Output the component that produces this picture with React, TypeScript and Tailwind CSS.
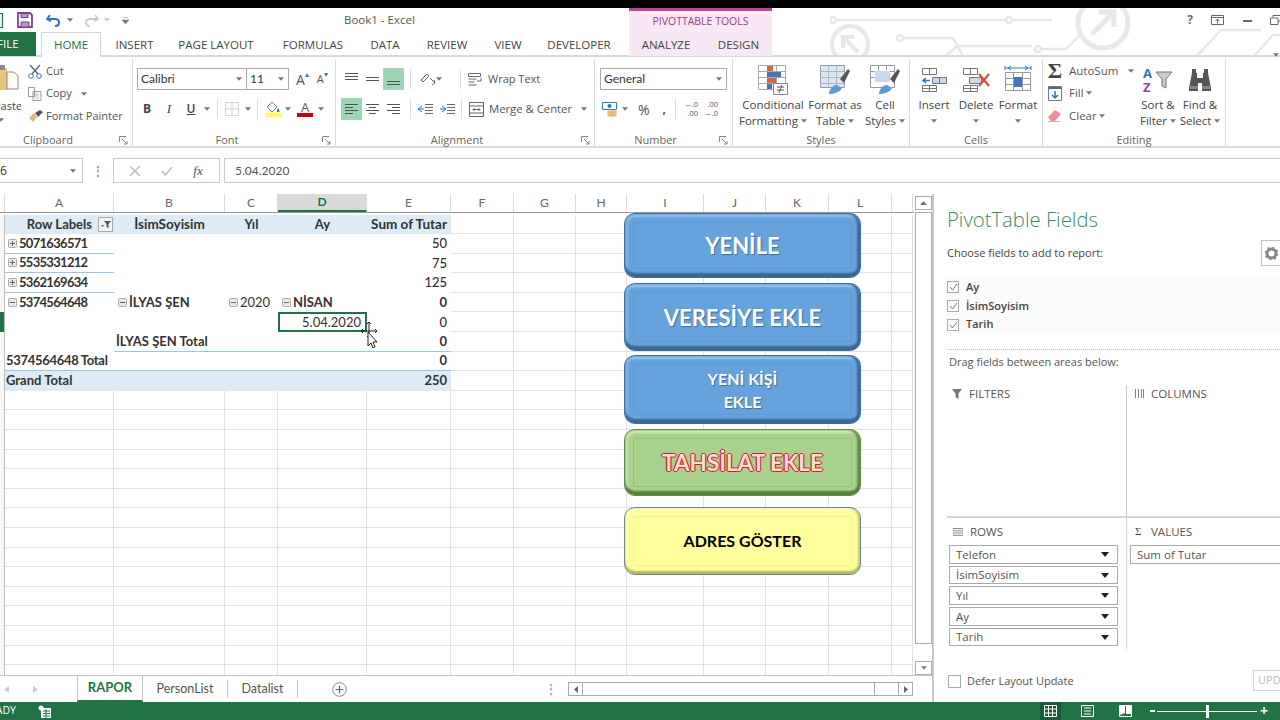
import type { ReactNode } from 'react';

const Caret = ({ className = '' }: { className?: string }) => (
  <svg width="6" height="4" viewBox="0 0 7 4" className={`inline-block shrink-0 ${className}`}>
    <path d="M0 0h7L3.500 4z" fill="#777" />
  </svg>
);

const Launcher = () => (
  <svg width="9" height="9" viewBox="0 0 9 9" className="absolute right-[4px] top-[2px]">
    <path d="M.5 6V.5H7M3 3l5 5M8 5v3H5" fill="none" stroke="#888" />
  </svg>
);

const Group = ({ width, label, labelClass = '', launcher, children }: { width: string; label: string; labelClass?: string; launcher?: boolean; children: ReactNode }) => (
  <div className={`${width} shrink-0 h-[87px] border-r border-[#dcdcdc] flex flex-col`}>
    <div className="h-[75px] flex">{children}</div>
    <div className={`relative h-[12px] text-center text-[11px] leading-[12px] text-[#666] ${labelClass}`}>
      {label}
      {launcher && <Launcher />}
    </div>
  </div>
);

const Big = ({ width, icon, lines }: { width: string; icon: ReactNode; lines: ReactNode[] }) => (
  <div className={`${width} shrink-0 flex flex-col items-center text-[11.500px] leading-[16px] text-[#444] whitespace-nowrap pt-[4px]`}>
    <div className="h-[34px] shrink-0 flex items-center justify-center">{icon}</div>
    <div className="text-center">{lines[0]}</div>
    <div className="text-center flex items-center gap-[3px] h-[16px]">{lines[1]}</div>
  </div>
);

const Tab = ({ children, className = '' }: { children: ReactNode; className?: string }) => (
  <div className={`h-[25px] flex items-center justify-center text-[11.500px] text-[#444] shrink-0 ${className}`}>{children}</div>
);

const AlignLines = ({ rows, active = false }: { rows: number[][]; active?: boolean }) => (
  <div className={`w-[21px] h-[22px] flex items-center justify-center shrink-0 ${active ? 'bg-[#9fd5b7]' : ''}`}>
    <svg width="15" height="14" viewBox="0 0 15 14">
      {rows.map(([x1, x2, y], i) => (
        <path key={i} d={`M${x1} ${y}.5H${x2}`} stroke="#555" />
      ))}
    </svg>
  </div>
);

const widths = [5, 109, 111, 53, 89, 84, 63, 62, 51, 77, 62, 63, 63, 21];
const letters = ['', 'A', 'B', 'C', 'D', 'E', 'F', 'G', 'H', 'I', 'J', 'K', 'L', ''];

type Cell = { t?: string; b?: boolean; right?: boolean; center?: boolean; exp?: '+' | '-'; bg?: boolean; line?: boolean; sel?: boolean; medium?: boolean; pad?: string; lg?: boolean; track?: string };

const Exp = ({ kind }: { kind: '+' | '-' }) => (
  <svg width="9" height="9" viewBox="0 0 9 9" className="shrink-0 mr-[2px]">
    <rect x=".5" y=".5" width="8" height="8" rx="1" fill="#e8e8e8" stroke="#aaa" />
    <path d={kind === '+' ? 'M2 4.500h5M4.500 2v5' : 'M2 4.500h5'} stroke="#666" />
  </svg>
);

const digits = 'tracking-[-0.7px]';

const pivotRows: Cell[][] = [
  [{ t: 'Row Labels', b: true, bg: true, pad: 'justify-end pr-[1px]' }, { t: 'İsimSoyisim', b: true, bg: true, center: true, lg: true }, { t: 'Yıl', b: true, bg: true, center: true }, { t: 'Ay', b: true, bg: true, center: true }, { t: 'Sum of Tutar', b: true, bg: true, right: true, lg: true }],
  [{ t: '5071636571', b: true, exp: '+', line: true, pad: 'pl-[3px]', track: digits }, {}, {}, {}, { t: '50', right: true, medium: true }],
  [{ t: '5535331212', b: true, exp: '+', line: true, pad: 'pl-[3px]', track: digits }, {}, {}, {}, { t: '75', right: true, medium: true }],
  [{ t: '5362169634', b: true, exp: '+', line: true, pad: 'pl-[3px]', track: digits }, {}, {}, {}, { t: '125', right: true, medium: true }],
  [{ t: '5374564648', b: true, exp: '-', pad: 'pl-[3px]', track: digits }, { t: 'İLYAS ŞEN', b: true, exp: '-' }, { t: '2020', exp: '-' }, { t: 'NİSAN', b: true, exp: '-' }, { t: '0', b: true, right: true }],
  [{}, {}, {}, { t: '5.04.2020', right: true, sel: true }, { t: '0', right: true, medium: true }],
  [{}, { t: 'İLYAS ŞEN Total', b: true, line: true }, { line: true }, { line: true }, { t: '0', b: true, right: true, line: true }],
  [{ t: '5374564648 Total', b: true, line: true, pad: 'pl-[1px]', track: 'tracking-[-0.3px]' }, { line: true }, { line: true }, { line: true }, { t: '0', b: true, right: true, line: true }],
  [{ t: 'Grand Total', b: true, bg: true, pad: 'pl-[1px]' }, { bg: true }, { bg: true }, { bg: true }, { t: '250', b: true, bg: true, right: true }],
];

const PivotCell = ({ cell, filter }: { cell: Cell; filter?: boolean }) => {
  const cls = [
    'h-[19.6px] flex items-center whitespace-nowrap text-[#333]',
    cell.lg ? 'text-[13.5px]' : 'text-[13px]',
    cell.track ?? '',
    cell.bg ? 'bg-[#ddebf7]' : 'bg-white',
    cell.line ? 'border-b border-[#9dc3e6]' : '',
    cell.b ? 'font-bold' : cell.medium ? 'font-medium' : '',
    cell.sel ? 'justify-end pr-[4px] border-2 border-[#217346]' : cell.right ? 'justify-end pr-[4px]' : cell.center ? 'justify-center' : cell.pad ?? (cell.exp ? 'pl-[4px]' : 'pl-[2px]'),
  ].join(' ');
  return (
    <div className={cls}>
      {cell.exp && <Exp kind={cell.exp} />}
      {cell.t}
      {filter && (
        <span className="ml-[6px] w-[15px] h-[15px] bg-[#f2f2f2] border border-[#aaa] flex items-center justify-center">
          <svg width="10" height="9" viewBox="0 0 10 9"><path d="M3 1h7L7.500 4v4L5.500 7V4zM0 5h3L1.500 7z" fill="#555" /></svg>
        </span>
      )}
    </div>
  );
};

const SheetGrid = () => {
  const rows = Array.from({ length: 24 });
  return (
    <div className="mt-[1.5px] grid grid-cols-[5px_109px_111px_53px_89px_84px_63px_62px_51px_77px_62px_63px_63px_21px] font-['Lato',sans-serif]">
      {rows.map((_, r) =>
        widths.map((__, c) => {
          if (c === 0) return <div key={`${r}-0`} className={`h-[19.6px] border-r border-[#bdbdbd] ${r === 5 ? 'bg-[#217346]' : 'bg-[#f8f8f8]'}`} />;
          const pivot = pivotRows[r];
          if (pivot && c <= 5) return <PivotCell key={`${r}-${c}`} cell={pivot[c - 1]} filter={r === 0 && c === 1} />;
          return <div key={`${r}-${c}`} className="h-[19.6px] border-r border-b border-[#e2e2e2]" />;
        }),
      )}
    </div>
  );
};

const blueBevel = "bg-[#66a3dc] border border-[#3f6f9f] text-white [text-shadow:1px_1px_1px_#3d6b99] shadow-[inset_0_-4px_2px_#3a6690,inset_-3px_0_2px_#3f6e9c,inset_3px_0_2px_#7db4e6,inset_0_3px_2px_#93c8f0]";

const Shape = ({ className, inner, children }: { className: string; inner: string; children: ReactNode }) => (
  <div className={`relative w-[237px] rounded-[11px] flex flex-col items-center justify-center font-bold text-center ${className}`}>
    <div className={`absolute inset-x-[8px] inset-y-[8px] border rounded-[2px] ${inner}`} />
    {children}
  </div>
);

const FieldCheck = ({ label }: { label: string }) => (
  <div className="h-[19px] flex items-center gap-[7px] ml-[1px]">
    <span className="w-[12px] h-[12px] border border-[#aaa] bg-white flex items-center justify-center">
      <svg width="9" height="8" viewBox="0 0 9 8"><path d="M1 4l2.500 3L8 1" fill="none" stroke="#777" /></svg>
    </span>
    <span className="font-semibold text-[11px] text-[#444]">{label}</span>
  </div>
);

const AreaField = ({ label, w = 'w-[169px]', arrow = true }: { label: string; w?: string; arrow?: boolean }) => (
  <div className={`${w} h-[18.700px] shrink-0 border border-[#aaa] bg-white flex items-center justify-between pl-[6px] pr-[8px] text-[11.500px] text-[#555]`}>
    {label}
    {arrow && <svg width="8" height="5" viewBox="0 0 8 5"><path d="M0 0h8L4 5z" fill="#222" /></svg>}
  </div>
);

const Sep = ({ className }: { className: string }) => <div className={`w-px h-[20px] bg-[#dcdcdc] shrink-0 ${className}`} />;

const App = () => {
  return (
    <div className="relative w-[1280px] h-[720px] overflow-hidden bg-white flex flex-col font-['Open_Sans',sans-serif]">
      <div className="h-[8px] bg-black shrink-0" />

      {/* title bar + tabs, circuit art sits behind */}
      <div className="relative h-[49px] shrink-0">
        <svg width="450" height="49" viewBox="830 8 450 49" className="absolute right-0 top-0" fill="none" stroke="#e8e8e8" strokeWidth="2.500">
          <circle cx="833" cy="20" r="3" />
          <path d="M836 20H1006" />
          <circle cx="1009" cy="20" r="3" />
          <path d="M1012 20h40" />
          <circle cx="850" cy="44" r="18" strokeWidth="4" />
          <path d="M858 52l-14-14M843 48V37h11" strokeWidth="4" />
          <circle cx="900" cy="38" r="3" />
          <path d="M903 38h50l10 18" />
          <path d="M945 57l12-11h75" />
          <circle cx="1038" cy="49" r="3" />
          <path d="M1041 49h25l14-14" />
          <circle cx="1103" cy="23" r="25" strokeWidth="5" />
          <path d="M1092 34l21-21M1099 12h15v15" strokeWidth="5" />
          <path d="M1196 57l25-27h40" />
          <path d="M1253 57l20-22h7" />
        </svg>

        <div className="relative h-[24px] flex items-center">
          <div className="w-[3px] h-[15px] border-y border-r border-[#217346] bg-[#e6f2ea]" />
          <svg width="16" height="16" viewBox="0 0 16 16" className="ml-[14px]">
            <path d="M1 1h12l2 2v12H1z" fill="none" stroke="#7b3f98" strokeWidth="1.800" />
            <path d="M4 1.500h7v4H4zM4 10h8v5H4z" fill="#b695cc" stroke="#7b3f98" />
          </svg>
          <svg width="15" height="13" viewBox="0 0 15 13" className="ml-[13px]">
            <path d="M4 1L1 5l4 2M1.500 5H9c3 0 4 2 4 3.500S12 12 9 12" fill="none" stroke="#2e75b5" strokeWidth="2" />
          </svg>
          <Caret className="ml-[6px]" />
          <svg width="15" height="13" viewBox="0 0 15 13" className="ml-[11px]">
            <path d="M11 1l3 4-4 2M13.500 5H6C3 5 2 7 2 8.500S3 12 6 12" fill="none" stroke="#ccc" strokeWidth="2" />
          </svg>
          <Caret className="ml-[5px] opacity-40" />
          <svg width="7" height="7" viewBox="0 0 7 7" className="ml-[12px]"><path d="M1 .5h5M0 3h7L3.500 7z" fill="#777" stroke="#777" strokeWidth=".5" /></svg>
          <div className="absolute left-[344px] text-[11.500px] text-[#555]">Book1 - Excel</div>
          <div className="absolute right-0 top-0 h-[24px] flex items-center text-[#666]">
            <span className="font-bold text-[12px] mr-[18px]">?</span>
            <svg width="13" height="10" viewBox="0 0 13 10" className="mr-[19px]"><path d="M.5.500h12v9H.5zM.5 2.500h12M6.500 8V4M4.500 6l2-2 2 2" fill="none" stroke="#666" /></svg>
            <div className="w-[9px] h-[2px] bg-[#666] mr-[18px] mt-[1px]" />
            <svg width="11" height="10" viewBox="0 0 11 10" className="mr-[-1px]"><path d="M3 2.500V.5h7.500V6H8M.5 3h7.500v6.500H.5z" fill="none" stroke="#666" /></svg>
          </div>
        </div>

        <div className="relative h-[25px] flex border-b-2 border-[#dadada]">
          <div className="w-[36px] h-[24px] bg-[#217346] text-white text-[11.500px] flex items-center overflow-hidden shrink-0"><span className="-ml-[3px]">FILE</span></div>
          <div className="ml-[5px] w-[60px] h-[25px] bg-white border-x border-t border-[#d4d4d4] text-[#217346] text-[11.500px] flex items-center justify-center shrink-0 z-10">HOME</div>
          <Tab className="w-[67px]">INSERT</Tab>
          <Tab className="w-[98px] ml-[-1px]">PAGE LAYOUT</Tab>
          <Tab className="w-[92px] ml-[2px]">FORMULAS</Tab>
          <Tab className="w-[48px] ml-[2px]">DATA</Tab>
          <Tab className="w-[70px] ml-[3px]">REVIEW</Tab>
          <Tab className="w-[52px]">VIEW</Tab>
          <Tab className="w-[84px] ml-[3px]">DEVELOPER</Tab>
          <div className="absolute left-[629px] top-[-24px] w-[143px] h-[48px] bg-[#f8e8f5] border-t-[3px] border-[#b5479a]">
            <div className="h-[21px] flex items-center justify-center text-[10.500px] text-[#a0398a]">PIVOTTABLE TOOLS</div>
            <div className="flex text-[11.500px] text-[#444]">
              <Tab className="w-[74px]">ANALYZE</Tab>
              <Tab className="w-[71px]">DESIGN</Tab>
            </div>
          </div>
          <div className="absolute right-[1px] top-[9px]"><Caret /></div>
        </div>
      </div>

      {/* ribbon */}
      <div className="h-[91px] shrink-0 flex pt-[2px] border-b-2 border-[#dadada] bg-white">
        <Group width="w-[133px]" label="Clipboard" labelClass="pr-[36px]" launcher>
          <div className="w-[21px] shrink-0 overflow-hidden flex flex-col pt-[4px] text-[11px] text-[#444]">
            <svg width="19" height="30" viewBox="0 0 19 30" className="shrink-0">
              <path d="M-5 5h12v22H-5z" fill="#e9c47c" />
              <path d="M-2 2h7v5h-7z" fill="#8a8a8a" />
              <path d="M7 9h7l4 4v13H7z" fill="#fff" stroke="#888" />
            </svg>
            <div className="-ml-[6px] leading-[14px] mt-[6px]">Paste</div>
            <Caret className="ml-[-2px] mt-[5px]" />
          </div>
          <div className="ml-[7px] pt-[1px] text-[11px] text-[#555] whitespace-nowrap">
            <div className="h-[22px] flex items-center">
              <svg width="14" height="15" viewBox="0 0 14 15"><path d="M2 1l8 9M12 1L4 10" stroke="#666" strokeWidth="1.300" /><circle cx="3" cy="12" r="2.300" fill="none" stroke="#2e75b5" /><circle cx="11" cy="12" r="2.300" fill="none" stroke="#2e75b5" /></svg>
              <span className="ml-[4px]">Cut</span>
            </div>
            <div className="h-[23px] flex items-center">
              <svg width="14" height="14" viewBox="0 0 14 14"><path d="M.5.500h6v9h-6zM5 4.500h8v9H5z" fill="#fff" stroke="#999" /><path d="M7 7h4M7 9h4M7 11h4" stroke="#bbb" /></svg>
              <span className="ml-[4px]">Copy</span>
              <Caret className="ml-[9px]" />
            </div>
            <div className="h-[22px] flex items-center">
              <svg width="16" height="14" viewBox="0 0 16 14"><path d="M1 9l5-5 3 4-4 5z" fill="#e2b878" /><path d="M7 4l5-3 3 2-5 5z" fill="#555" /></svg>
              <span className="ml-[2px]">Format Painter</span>
            </div>
          </div>
        </Group>

        <Group width="w-[203px]" label="Font" labelClass="pr-[14px]" launcher>
          <div className="pl-[4px] pt-[9px] w-full">
            <div className="flex items-center h-[22px]">
              <div className="w-[110px] h-[22px] border border-[#aaa] flex items-center justify-between pl-[3px] pr-[4px] text-[12px] text-[#333] font-['Lato',sans-serif]">Calibri<Caret /></div>
              <div className="w-[42px] h-[22px] border border-l-0 border-[#aaa] flex items-center justify-between pl-[3px] pr-[4px] text-[12px] text-[#333] font-['Lato',sans-serif]">11<Caret /></div>
              <span className="ml-[7px] text-[14px] text-[#555]">A</span><span className="text-[8px] text-[#2e75b5] -mt-[10px]">▴</span>
              <span className="ml-[8px] text-[11px] text-[#555]">A</span><span className="text-[8px] text-[#2e75b5] -mt-[10px]">▾</span>
            </div>
            <div className="flex items-center h-[22px] mt-[8px] text-[#444] text-[12px]">
              <span className="w-[20px] text-center font-bold">B</span>
              <span className="w-[24px] text-center italic font-['Liberation_Serif',serif] text-[13px]">I</span>
              <span className="w-[20px] text-center font-semibold underline">U</span>
              <Caret className="ml-[3px]" />
              <Sep className="ml-[7px]" />
              <svg width="14" height="14" viewBox="0 0 14 14" className="ml-[7px]"><path d="M.5.500h13v13H.5zM7 .5v13M.5 7h13" fill="none" stroke="#aaa" strokeDasharray="1 1" /></svg>
              <Caret className="ml-[6px]" />
              <Sep className="ml-[6px]" />
              <div className="ml-[7px] w-[16px] flex flex-col items-center">
                <svg width="16" height="12" viewBox="0 0 16 12"><path d="M2 6l5-5 5 5-5 5z" fill="#fff" stroke="#777" /><path d="M13 7c2 2 2 4 0 4s-1-2 0-4z" fill="#2e75b5" /></svg>
                <div className="w-[16px] h-[4px] bg-[#ffff4d]" />
              </div>
              <Caret className="ml-[4px]" />
              <div className="ml-[6px] w-[16px] flex flex-col items-center leading-[12px]">
                <span className="text-[13px] leading-[12px] text-[#555]">A</span>
                <div className="w-[16px] h-[4px] bg-[#d40000]" />
              </div>
              <Caret className="ml-[5px]" />
            </div>
          </div>
        </Group>

        <Group width="w-[259px]" label="Alignment" labelClass="pr-[16px]" launcher>
          <div className="pl-[5px] pt-[9px]">
            <div className="flex items-center h-[22px]">
              <AlignLines rows={[[1, 14, 1], [1, 14, 4], [1, 14, 7]]} />
              <AlignLines rows={[[1, 14, 5], [1, 14, 8]]} />
              <AlignLines active rows={[[1, 14, 9], [1, 14, 12]]} />
              <Sep className="ml-[6px]" />
              <svg width="16" height="14" viewBox="0 0 16 14" className="ml-[9px]"><path d="M1 8l6-6 2 2-6 6zM10 6l5 5M12 13l3-2-1-3" fill="none" stroke="#666" /></svg>
              <Caret />
              <Sep className="ml-[18px]" />
              <svg width="15" height="15" viewBox="0 0 15 15" className="ml-[7px]"><path d="M.5 1.500h12v3H.5zM.5 7h8M.5 10h6M.5 13h8M13 6v3H9" fill="none" stroke="#666" /></svg>
              <span className="ml-[5px] text-[11px] text-[#555]">Wrap Text</span>
            </div>
            <div className="flex items-center h-[22px] mt-[8px]">
              <AlignLines active rows={[[1, 14, 2], [1, 9, 5], [1, 14, 8], [1, 9, 11]]} />
              <AlignLines rows={[[1, 14, 2], [4, 11, 5], [1, 14, 8], [4, 11, 11]]} />
              <AlignLines rows={[[1, 14, 2], [6, 14, 5], [1, 14, 8], [6, 14, 11]]} />
              <Sep className="ml-[6px]" />
              <svg width="16" height="12" viewBox="0 0 16 12" className="ml-[6px]"><path d="M5 3l-4 3 4 3M1 6h6" fill="none" stroke="#2e75b5" /><path d="M8 1.500h8M8 4.500h8M8 7.500h8M8 10.500h8" stroke="#666" /></svg>
              <svg width="16" height="12" viewBox="0 0 16 12" className="ml-[6px]"><path d="M3 3l4 3-4 3M7 6H1" fill="none" stroke="#2e75b5" /><path d="M8 1.500h8M8 4.500h8M8 7.500h8M8 10.500h8" stroke="#666" /></svg>
              <Sep className="ml-[6px]" />
              <svg width="15" height="15" viewBox="0 0 15 15" className="ml-[7px]"><path d="M.5.500h14v14H.5zM.5 4h14M.5 11h14M4 7.500h7M5.500 6L4 7.500 5.500 9M9.500 6L11 7.500 9.500 9" fill="none" stroke="#666" /></svg>
              <span className="ml-[5px] text-[11.300px] text-[#555] whitespace-nowrap">Merge &amp; Center</span>
              <Caret className="ml-[9px]" />
            </div>
          </div>
        </Group>

        <Group width="w-[138px]" label="Number" labelClass="pr-[16px]" launcher>
          <div className="pl-[5px] pt-[9px]">
            <div className="w-[127px] h-[22px] border border-[#aaa] flex items-center justify-between pl-[3px] pr-[4px] text-[12px] text-[#333] font-['Lato',sans-serif]">General<Caret /></div>
            <div className="flex items-center h-[22px] mt-[8px] text-[#555]">
              <svg width="16" height="16" viewBox="0 0 16 16" className="ml-[2px]"><path d="M.5 1.500h14v7H.5z" fill="#fff" stroke="#2e75b5" /><circle cx="7.500" cy="5" r="2" fill="#2e75b5" /><ellipse cx="10" cy="11" rx="5" ry="1.800" fill="#e4bb6f" /><ellipse cx="10" cy="14" rx="5" ry="1.800" fill="#e4bb6f" /></svg>
              <Caret className="ml-[4px]" />
              <span className="ml-[10px] text-[14px]">%</span>
              <span className="ml-[13px] font-bold text-[12px] leading-[12px]">,</span>
              <Sep className="ml-[9px]" />
              <div className="ml-[7px] w-[15px] text-[7.500px] leading-[9px] text-right whitespace-nowrap"><span className="text-[#2e75b5]">←</span>.0<br />.00</div>
              <div className="ml-[5px] w-[15px] text-[7.500px] leading-[9px] text-right whitespace-nowrap">.00<br /><span className="text-[#2e75b5]">→</span>.0</div>
            </div>
          </div>
        </Group>

        <Group width="w-[177px]" label="Styles">
          <div className="flex ml-[5px]">
            <Big
              width="w-[70px]"
              icon={
                <svg width="30" height="30" viewBox="0 0 30 30">
                  <path d="M.5.500h27v24H.5zM.5 6.500h27M.5 12.500h27M.5 18.500h27M9.500.5v24M18.500.5v24" fill="#fff" stroke="#aaa" />
                  <path d="M9 1h6v5H9z" fill="#d8654a" /><path d="M9 7h14v5H9z" fill="#3e78b8" /><path d="M9 13h9v5H9z" fill="#d8654a" /><path d="M9 19h5v5H9z" fill="#3e78b8" />
                  <path d="M15.500 18.500h14v11h-14z" fill="#fff" stroke="#888" /><path d="M19 22h7M19 25h7M24 20l-3 8" stroke="#555" />
                </svg>
              }
              lines={['Conditional', <>Formatting <Caret /></>]}
            />
            <Big
              width="w-[54px]"
              icon={
                <svg width="30" height="30" viewBox="0 0 30 30">
                  <path d="M.5.500h24v22H.5z" fill="#dce6f1" stroke="#999" /><path d="M.5 6.500h24M.5 12.500h24M.5 18.500h24M8.500.5v22M16.500.5v22" stroke="#aab8c9" />
                  <path d="M20 14l8-10 2 2-6 12z" fill="#555" /><path d="M9 29c0-5 4-9 8-9l5 3c-2 4-8 6-13 6z" fill="#5b9bd5" />
                </svg>
              }
              lines={['Format as', <>Table <Caret /></>]}
            />
            <Big
              width="w-[46px]"
              icon={
                <svg width="30" height="30" viewBox="0 0 30 30">
                  <path d="M.5.500h24v22H.5zM.5 6.500h4M20 6.500h4M.5 12.500h4M8.500.5v5M16.500.5v5" fill="#fff" stroke="#999" /><path d="M5 6h15v11H5z" fill="#c9d9ee" />
                  <path d="M20 14l8-10 2 2-6 12z" fill="#555" /><path d="M9 29c0-5 4-9 8-9l5 3c-2 4-8 6-13 6z" fill="#5b9bd5" />
                </svg>
              }
              lines={['Cell', <>Styles <Caret /></>]}
            />
          </div>
        </Group>

        <Group width="w-[133px]" label="Cells">
          <div className="flex ml-[3px]">
            <Big
              width="w-[42px]"
              icon={
                <svg width="28" height="28" viewBox="0 0 28 28">
                  <path d="M2.500 2.500h14v6h-14zM2.500 19.500h14v6h-14zM9.500 2.500v6M9.500 19.500v6M2.500 22.500h14" fill="none" stroke="#777" />
                  <path d="M12.500 11.500h14v6h-14zM19.500 11.500v6" fill="#c9d9ee" stroke="#777" />
                  <path d="M10 14.500H3M6 12l-3 2.500L6 17" fill="none" stroke="#2e75b5" strokeWidth="1.500" />
                </svg>
              }
              lines={['Insert', <Caret key="c" />]}
            />
            <Big
              width="w-[42px]"
              icon={
                <svg width="30" height="28" viewBox="0 0 30 28">
                  <path d="M2.500 2.500h14v6h-14zM2.500 19.500h14v6h-14zM9.500 2.500v6M9.500 19.500v6M2.500 22.500h14" fill="none" stroke="#777" />
                  <path d="M8.500 11.500h12v6h-12z" fill="#c9d9ee" stroke="#777" />
                  <path d="M18 8l10 12M28 8L18 20" stroke="#d9482b" strokeWidth="2" />
                </svg>
              }
              lines={['Delete', <Caret key="c" />]}
            />
            <Big
              width="w-[42px]"
              icon={
                <svg width="28" height="30" viewBox="0 0 28 30">
                  <path d="M1 3h26M1 1v4M27 1v4M4 3l3-2M4 3l3 2M24 3l-3-2M24 3l-3 2" fill="none" stroke="#2e75b5" />
                  <path d="M1.500 7.500h25v18h-25zM9.500 7.500v18M18.500 7.500v18M1.500 13.500h25M1.500 19.500h25" fill="#fff" stroke="#999" />
                  <path d="M10 12h8v10h-8z" fill="#3e78b8" />
                </svg>
              }
              lines={['Format', <Caret key="c" />]}
            />
          </div>
        </Group>

        <Group width="w-[183px]" label="Editing">
          <div className="flex ml-[4px]">
            <div className="w-[90px] shrink-0 text-[11.500px] text-[#555] whitespace-nowrap">
              <div className="h-[23px] flex items-center">
                <span className="w-[16px] text-[22px] leading-[20px] font-['Liberation_Serif',serif] text-[#444] font-bold text-center">Σ</span>
                <span className="ml-[6px]">AutoSum</span>
                <Caret className="ml-[10px]" />
              </div>
              <div className="h-[22px] flex items-center">
                <svg width="14" height="15" viewBox="0 0 14 15" className="ml-[1px]"><path d="M.5.500h13v14H.5z" fill="#fff" stroke="#777" /><path d="M.5 1h13v2H.5z" fill="#666" /><path d="M7 5v7M4 9l3 3 3-3" fill="none" stroke="#2e75b5" strokeWidth="1.500" /></svg>
                <span className="ml-[7px]">Fill</span>
                <Caret className="ml-[2px]" />
              </div>
              <div className="h-[23px] flex items-center">
                <svg width="15" height="13" viewBox="0 0 15 13"><path d="M1 8l7-7 6 4-6 7H4z" fill="#ea8f9b" /><path d="M1 12.500h12" stroke="#bbb" /></svg>
                <span className="ml-[7px]">Clear</span>
                <Caret className="ml-[2px]" />
              </div>
            </div>
            <Big
              width="w-[42px]"
              icon={
                <div className="flex items-center w-[30px] h-[28px] font-bold text-[13px] leading-[14px]">
                  <div className="w-[13px]">
                    <div className="text-[#2e75b5]">A</div>
                    <div className="text-[#8e44ad]">Z</div>
                  </div>
                  <svg width="16" height="18" viewBox="0 0 16 18"><path d="M0 1h16l-6 7v9l-4-2V8z" fill="#ccc" stroke="#777" /></svg>
                </div>
              }
              lines={['Sort &', <>Filter <Caret /></>]}
            />
            <Big
              width="w-[42px]"
              icon={
                <svg width="26" height="24" viewBox="0 0 26 24">
                  <path d="M5 1h4v4h1v5h6V5h1V1h4v4l3 15v3H15v-8h-4v8H2v-3L5 5z" fill="#555" />
                  <path d="M3 18h8v3H3zM15 18h8v3h-8z" fill="#888" />
                </svg>
              }
              lines={['Find &', <>Select <Caret /></>]}
            />
          </div>
        </Group>
      </div>

      {/* formula bar */}
      <div className="h-[36px] shrink-0 pt-[10px] flex">
        <div className="w-[83px] h-[25px] border border-l-0 border-[#c8c8c8] flex items-center justify-between pr-[6px] text-[12px] text-[#333]">
          <span>6</span><Caret />
        </div>
        <div className="w-[30px] flex items-center justify-center text-[#999] text-[12px] font-bold">⋮</div>
        <div className="w-[107px] h-[25px] border border-[#c8c8c8] flex items-center justify-around px-[6px] text-[#bbb]">
          <svg width="10" height="10" viewBox="0 0 10 10"><path d="M0 0l10 10M10 0L0 10" stroke="#bbb" strokeWidth="1.400" /></svg>
          <svg width="12" height="10" viewBox="0 0 12 10"><path d="M1 5l3.500 4L11 1" fill="none" stroke="#bbb" strokeWidth="1.400" /></svg>
          <span className="font-['Liberation_Serif',serif] italic text-[13px] text-[#555]">fx</span>
        </div>
        <div className="ml-[4px] flex-1 h-[25px] border-y border-l border-[#c8c8c8] flex items-center pl-[10px] text-[12px] text-[#555] font-['Lato',sans-serif]">5.04.2020</div>
      </div>

      {/* work area */}
      <div className="flex h-[518px] shrink-0">
        <div className="w-[932px] shrink-0 flex flex-col">
          <div className="h-[491px] flex pt-[10px]">
            <div className="relative w-[914px] shrink-0 overflow-hidden">
              <div className="h-[19px] flex border-b border-[#9a9a9a] text-[12px] text-[#666] font-['Lato',sans-serif]">
                {widths.map((w, i) => (
                  <div
                    key={i}
                    style={{ width: w }}
                    className={`h-[18px] shrink-0 flex items-center justify-center border-r border-[#dcdcdc] ${letters[i] === 'D' ? 'bg-[#d9d9d9] border-b-2 border-b-[#217346] text-[#217346] font-bold' : ''}`}
                  >
                    {letters[i]}
                  </div>
                ))}
              </div>
              <SheetGrid />

              {/* shapes floating over the sheet */}
              <div className="absolute left-[624px] top-[19px] flex flex-col font-['Lato',sans-serif]">
                <Shape inner="border-[#5e9ad3]" className={`h-[65px] text-[22px] ${blueBevel}`}>YENİLE</Shape>
                <Shape inner="border-[#5e9ad3]" className={`h-[68px] mt-[5px] text-[22px] ${blueBevel}`}>VERESİYE EKLE</Shape>
                <Shape inner="border-[#5e9ad3]" className={`h-[69px] mt-[4px] text-[16px] leading-[23px] ${blueBevel}`}>
                  <span>YENİ KİŞİ</span>
                  <span>EKLE</span>
                </Shape>
                <Shape
                  inner="border-[#97c07c]"
                  className="h-[67px] mt-[5px] bg-[#a9d18e] border border-[#5f8a48] text-[#fbdcd6] text-[22.500px] [text-shadow:1.200px_0_0_#c8232c,-1.200px_0_0_#c8232c,0_1.200px_0_#c8232c,0_-1.200px_0_#c8232c] shadow-[inset_0_-4px_2px_#557d3f,inset_-3px_0_2px_#658f4c,inset_3px_0_2px_#c4e4ae,inset_0_3px_2px_#d2edbd]"
                >
                  TAHSİLAT EKLE
                </Shape>
                <Shape
                  inner="border-[#f0f0a0]"
                  className="h-[68px] mt-[11px] bg-[#ffff9e] text-black text-[16px] border border-[#6d8790] shadow-[inset_0_-3px_2px_#b8b85c,inset_-2px_0_2px_#cfcf70,inset_0_2px_2px_#ffffd0]"
                >
                  ADRES GÖSTER
                </Shape>
              </div>

              <svg width="16" height="26" viewBox="0 0 16 26" className="absolute left-[361px] top-[128px]">
                <path d="M8 0v16M0 9h16M6 2l2-2 2 2M6 14l2 2 2-2M2 7L0 9l2 2M14 7l2 2-2 2" fill="none" stroke="#222" />
                <path d="M7 10v14l3-3 2 5 2-1-2-5h4z" fill="#fff" stroke="#222" />
              </svg>
            </div>

            <div className="ml-[1px] w-[17px] shrink-0 flex flex-col pt-[2px]">
              <div className="h-[14px] border border-[#ababab] flex items-center justify-center"><svg width="7" height="4" viewBox="0 0 7 4"><path d="M0 4h7L3.500 0z" fill="#777" /></svg></div>
              <div className="h-[432px] mt-[2px] border border-[#ababab] bg-white" />
              <div className="flex-1" />
              <div className="h-[14px] border border-[#ababab] flex items-center justify-center"><Caret /></div>
            </div>
          </div>

          <div className="h-[27px] border-t border-[#c4c4c4] flex items-center">
            <svg width="5" height="7" viewBox="0 0 5 7" className="ml-[4px]"><path d="M5 0v7L0 3.500z" fill="#ccc" /></svg>
            <svg width="5" height="7" viewBox="0 0 5 7" className="ml-[24px]"><path d="M0 0v7l5-3.500z" fill="#ccc" /></svg>
            <div className="ml-[39px] w-[66px] h-[26px] -mt-px bg-white border-x border-[#c4c4c4] border-b-2 border-b-[#217346] flex items-center justify-center text-[13px] font-bold text-[#217346] font-['Lato',sans-serif]">RAPOR</div>
            <div className="w-[85px] h-[18px] border-r border-[#c4c4c4] flex items-center justify-center text-[12.500px] text-[#555] font-['Lato',sans-serif]">PersonList</div>
            <div className="w-[70px] h-[18px] border-r border-[#c4c4c4] flex items-center justify-center text-[12.500px] text-[#555] font-['Lato',sans-serif]">Datalist</div>
            <svg width="15" height="15" viewBox="0 0 15 15" className="ml-[34px]"><circle cx="7.500" cy="7.500" r="6.800" fill="none" stroke="#888" /><path d="M7.500 3.500v8M3.500 7.500h8" stroke="#666" strokeWidth="1.200" /></svg>
            <span className="ml-[198px] w-[14px] text-[12px] font-bold text-[#aaa]">⋮</span>
            <div className="ml-[9px] w-[345px] h-[14px] border border-[#ababab] flex items-center">
              <div className="w-[14px] h-full border-r border-[#ababab] flex items-center justify-center"><svg width="4" height="7" viewBox="0 0 4 7"><path d="M4 0v7L0 3.500z" fill="#666" /></svg></div>
              <div className="w-[292px] h-full border-r border-[#ababab]" />
              <div className="flex-1" />
              <div className="w-[14px] h-full border-l border-[#ababab] flex items-center justify-center"><svg width="4" height="7" viewBox="0 0 4 7"><path d="M0 0v7l4-3.500z" fill="#666" /></svg></div>
            </div>
          </div>
        </div>

        {/* pivot field panel */}
        <div className="w-[348px] shrink-0 mt-[10px] border-l-2 border-[#c8c8c8] pl-[13px] overflow-hidden">
          <div className="h-[34px] mt-[8px] flex items-center font-light text-[20.300px] text-[#3d8a6d] whitespace-nowrap">PivotTable Fields</div>
          <div className="h-[26px] mt-[4px] flex items-center text-[11px] text-[#444] relative">
            Choose fields to add to report:
            <div className="absolute left-[314px] top-[0px] w-[30px] h-[26px] border border-[#c0c0c0] flex items-center pl-[3px]">
              <svg width="13" height="13" viewBox="0 0 13 13"><circle cx="6.500" cy="6.500" r="4.500" fill="none" stroke="#888" strokeWidth="3" /><circle cx="6.500" cy="6.500" r="6" fill="none" stroke="#888" strokeWidth="2" strokeDasharray="2 2.700" /></svg>
            </div>
          </div>
          <div className="mt-[12px] h-[56px] bg-[#fbfbfb] -ml-[1px] flex flex-col">
            <FieldCheck label="Ay" />
            <FieldCheck label="İsimSoyisim" />
            <FieldCheck label="Tarih" />
          </div>
          <div className="mt-[15px] border-t border-dotted border-[#bbb]" />
          <div className="h-[24px] flex items-center text-[11px] text-[#555] pl-[2px]">Drag fields between areas below:</div>

          <div className="mt-[11px] grid grid-cols-[180px_1fr] grid-rows-[131px_133px] h-[267px]">
            <div className="border-r border-[#c8c8c8]">
              <div className="h-[17px] flex items-center gap-[7px] pl-[5px] text-[11.500px] text-[#555]">
                <svg width="10" height="10" viewBox="0 0 10 10"><path d="M0 0h10L6.500 4.500V10L3.500 8V4.500z" fill="#777" /></svg>FILTERS
              </div>
            </div>
            <div>
              <div className="h-[17px] flex items-center gap-[7px] pl-[8px] text-[11.500px] text-[#555]">
                <svg width="9" height="9" viewBox="0 0 9 9"><path d="M.5 0v9M3.500 0v9M6.500 0v9M8.500 0v9" stroke="#888" /></svg>COLUMNS
              </div>
            </div>
            <div className="border-r border-t-2 border-[#d4d4d4] pt-[5px] pl-[2px]">
              <div className="h-[17px] flex items-center gap-[7px] pl-[4px] text-[11.500px] text-[#555]">
                <svg width="10" height="8" viewBox="0 0 10 8"><path d="M0 .5h10M0 2.800h10M0 5h10M0 7.300h10" stroke="#888" /></svg>ROWS
              </div>
              <div className="mt-[5px] flex flex-col gap-[2px]">
                <AreaField label="Telefon" />
                <AreaField label="İsimSoyisim" />
                <AreaField label="Yıl" />
                <AreaField label="Ay" />
                <AreaField label="Tarih" />
              </div>
            </div>
            <div className="border-t-2 border-[#d4d4d4] pt-[5px] pl-[3px]">
              <div className="h-[17px] flex items-center gap-[7px] pl-[5px] text-[11.500px] text-[#555]">
                <span className="text-[11px] w-[9px] font-['Liberation_Serif',serif]">Σ</span>VALUES
              </div>
              <div className="mt-[5px]"><AreaField label="Sum of Tutar" w="w-[180px]" arrow={false} /></div>
            </div>
          </div>

          <div className="mt-[18px] flex items-center text-[11px] text-[#555] relative h-[22px]">
            <span className="w-[13px] h-[13px] border border-[#aaa] bg-white mr-[6px] ml-[1px]" />
            Defer Layout Update
            <div className="absolute left-[306px] top-0 w-[40px] h-[21px] border border-[#d4d4d4] text-[#bbb] flex items-center pl-[4px]">UPDATE</div>
          </div>
        </div>
      </div>

      {/* status bar */}
      <div className="h-[18px] shrink-0 bg-[#217346] flex items-center text-white text-[10.500px]">
        <span className="w-[38px] overflow-hidden flex justify-end"><span className="mr-[22px] whitespace-nowrap">ADY</span></span>
        <svg width="13" height="13" viewBox="0 0 13 13"><rect x="3" y="3" width="10" height="10" fill="#fff" /><circle cx="3" cy="3" r="2.500" fill="#fff" /><path d="M5 6h7M5 8.500h7M5 11h7M8 4v9" stroke="#217346" /></svg>
        <div className="ml-auto flex items-center h-full">
          <div className="w-[21px] h-full bg-[#1a5c38] flex items-center justify-center">
            <svg width="13" height="12" viewBox="0 0 13 12"><path d="M.5.500h12v11H.5zM.5 4h12M.5 8h12M4.500.5v11M8.500.5v11" fill="none" stroke="#fff" /></svg>
          </div>
          <div className="w-[20px]" />
          <svg width="13" height="12" viewBox="0 0 13 12"><path d="M.5.500h12v11H.5zM3 3h7M3 6h7M3 9h7" fill="none" stroke="#fff" /></svg>
          <div className="w-[25px]" />
          <svg width="13" height="12" viewBox="0 0 13 12"><path d="M.5.500h12v11H.5z" fill="none" stroke="#fff" /><path d="M1 1h5v7l-5 2zM7 1h5v8H7z" fill="#fff" /></svg>
          <div className="ml-[18px] w-[5px] h-[2px] bg-white" />
          <div className="ml-[2px] relative w-[100px] h-px bg-white">
            <div className="absolute left-[49px] top-[-6px] w-[3px] h-[13px] bg-white" />
          </div>
          <span className="ml-[3px] mr-[12px] text-[14px] font-bold leading-[14px]">+</span>
        </div>
      </div>
    </div>
  );
};

export default App;
